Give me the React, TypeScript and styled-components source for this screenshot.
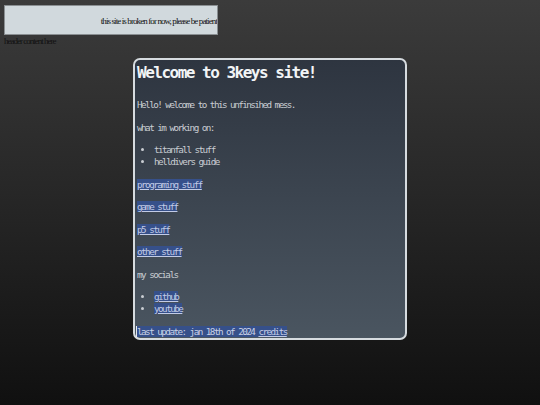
import React from 'react';
import styled, { createGlobalStyle } from 'styled-components';

const GlobalStyle = createGlobalStyle`
  html, body {
    height: 100%;
  }

  body {
    margin: 5px 4px 0;
    background: linear-gradient(180deg, #3b3b3b 0%, #262626 50%, #101010 100%);
    font-family: "Liberation Serif", serif;
    color: #111;
  }
`;

const HeaderBox = styled.div`
  height: 30px;
  width: 214px;
  box-sizing: border-box;
  border: 1px solid #8a8f92;
  background: #d1d9dd;
  overflow: hidden;
  white-space: nowrap;
  text-align: right;
  font-size: 9px;
  letter-spacing: -0.9px;
  line-height: 30px;
  color: #111;
`;

const HeaderNote = styled.div`
  font-size: 9px;
  letter-spacing: -1px;
  line-height: 12px;
  color: #111;
`;

const Main = styled.main`
  display: flex;
  justify-content: center;
  margin-top: 11px;
  margin-left: -4px;
  margin-right: -4px;
`;

const Card = styled.section`
  width: 274px;
  box-sizing: border-box;
  padding: 0 3px 0 2px;
  border: 2px solid #d6dbdf;
  border-radius: 7px;
  background: linear-gradient(180deg, #2e3540 0%, #3c4550 50%, #4a5560 100%);
  font-family: "DejaVu Sans Mono", "Liberation Mono", monospace;
  color: #c9cdd2;
`;

const Title = styled.h1`
  margin: 2px 0 15px;
  font-size: 16px;
  line-height: 22px;
  letter-spacing: -1.5px;
  font-weight: bold;
  color: #f2f4f6;
`;

const Para = styled.p<{ $last?: boolean }>`
  margin: 10.5px 0 ${(p) => (p.$last ? '0' : '10.5px')};
  font-size: 9.3px;
  line-height: 12px;
  letter-spacing: -1.55px;
`;

const List = styled.ul`
  margin: 10.5px 0;
  padding-left: 17px;
  font-size: 9.3px;
  line-height: 12px;
  letter-spacing: -1.55px;
`;

const Link = styled.a`
  background: #36508a;
  color: #c2cbe6;
  text-decoration: underline;
`;

const Selected = styled.span`
  background: #36508a;
  color: #c8d0e6;
  border-left: 1px solid #e4e8ee;
  margin-left: -1px;
`;

export default function App() {
  return (
    <>
      <GlobalStyle />
      <header>
        <HeaderBox>this site is broken for now, please be patient</HeaderBox>
        <HeaderNote>header content here</HeaderNote>
      </header>
      <Main>
        <Card>
          <Title>Welcome to 3keys site!</Title>
          <Para>Hello! welcome to this unfinsihed mess.</Para>
          <Para>what im working on:</Para>
          <List>
            <li>titanfall stuff</li>
            <li>helldivers guide</li>
          </List>
          <Para><Link href="#">programing stuff</Link></Para>
          <Para><Link href="#">game stuff</Link></Para>
          <Para><Link href="#">p5 stuff</Link></Para>
          <Para><Link href="#">other stuff</Link></Para>
          <Para>my socials</Para>
          <List>
            <li><Link href="#">github</Link></li>
            <li><Link href="#">youtube</Link></li>
          </List>
          <Para $last>
            <Selected>last update: jan 18th of 2024 <Link href="#">credits</Link></Selected>
          </Para>
        </Card>
      </Main>
    </>
  );
}
